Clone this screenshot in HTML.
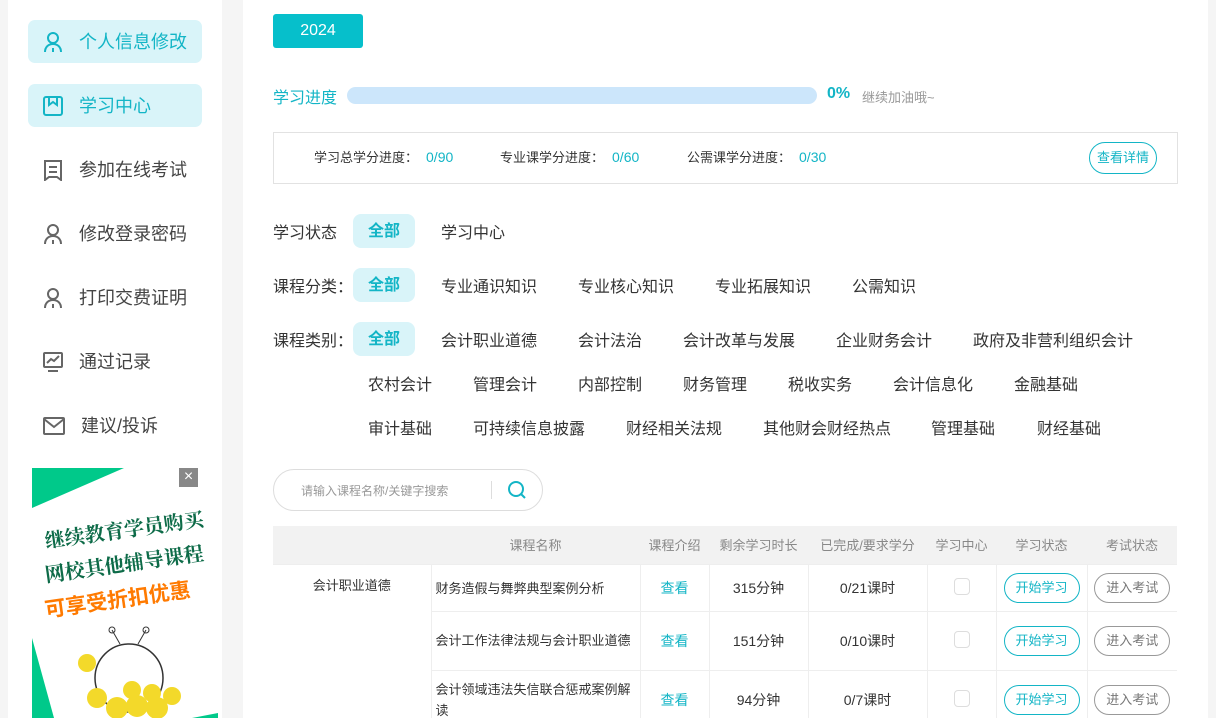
<!DOCTYPE html>
<html><head><meta charset="utf-8"><style>
*{margin:0;padding:0;box-sizing:border-box}
html,body{width:1216px;height:718px;overflow:hidden}
body{background:#f5f5f5;font-family:"Liberation Sans","Noto Sans CJK SC",sans-serif;color:#333;position:relative}
.a{position:absolute;white-space:nowrap}
#side{position:absolute;left:8px;top:0;width:214px;height:718px;background:#fff}
.mi{position:absolute;left:28px;width:174px;height:43px;border-radius:7px;font-size:18px;color:#444}
.mi.on{background:#d9f4f9;color:#13b5c6}
.mi svg{position:absolute;left:14px;top:11px}
.mi span{position:absolute;left:51px;top:8px}
#main{position:absolute;left:243px;top:0;width:965px;height:718px;background:#fff}
.f{font-size:16px;color:#333;position:absolute;white-space:nowrap;transform:translateY(-50%)}
.chip{position:absolute;left:353px;width:62px;height:34px;border-radius:8px;background:#d9f4f9;color:#13b5c6;font-weight:bold;font-size:16px;text-align:center;line-height:36px}
#tw{position:absolute;left:273px;top:526px;width:904px;height:192px;overflow:hidden}
table{border-collapse:collapse;width:904px;font-size:14px;table-layout:fixed}
td,th{border:1px solid #eee;text-align:center}
th{background:#f2f2f2;color:#888;font-weight:normal;font-size:13px;height:38px;border:none}
.btn{display:inline-block;width:76px;height:30px;border-radius:15px;border:1px solid #13b5c6;color:#13b5c6;line-height:28px;font-size:13px}
.btn.g{border-color:#999;color:#777}
.cb{display:inline-block;width:16px;height:17px;border:1px solid #ddd;border-radius:4px}
.v{color:#13b5c6;margin-left:8px;font-size:14px}
</style></head><body>
<div id="side"></div>
<div class="mi on" style="top:20px"><svg width="22" height="22" viewBox="0 0 22 22" fill="none" stroke="#13b5c6" stroke-width="2"><circle cx="11" cy="7" r="5"/><path d="M3 21c0-5 3.5-8 8-8s8 3 8 8M11 17v4"/></svg><span>个人信息修改</span></div>
<div class="mi on" style="top:84px"><svg width="22" height="22" viewBox="0 0 22 22" fill="none" stroke="#13b5c6" stroke-width="2"><rect x="2" y="2" width="18" height="18" rx="2"/><path d="M7 2v8l4-3 4 3V2"/></svg><span>学习中心</span></div>
<div class="mi" style="top:148px"><svg width="22" height="22" viewBox="0 0 22 22" fill="none" stroke="#666" stroke-width="2"><path d="M3 2h16v19l-4-3H7l-4 3z"/><path d="M7 8h8M7 13h8"/></svg><span>参加在线考试</span></div>
<div class="mi" style="top:212px"><svg width="22" height="22" viewBox="0 0 22 22" fill="none" stroke="#666" stroke-width="2"><circle cx="11" cy="7" r="5"/><path d="M3 21c0-5 3.5-8 8-8s8 3 8 8M11 17v4"/></svg><span>修改登录密码</span></div>
<div class="mi" style="top:276px"><svg width="22" height="22" viewBox="0 0 22 22" fill="none" stroke="#666" stroke-width="2"><circle cx="11" cy="7" r="5"/><path d="M3 21c0-5 3.5-8 8-8s8 3 8 8M11 17v4"/></svg><span>打印交费证明</span></div>
<div class="mi" style="top:340px"><svg width="22" height="22" viewBox="0 0 22 22" fill="none" stroke="#666" stroke-width="2"><rect x="2" y="2" width="18" height="14" rx="1"/><path d="M5 12l4-4 3 2 5-5M6 20h10"/></svg><span>通过记录</span></div>
<div class="mi" style="top:404px"><svg width="24" height="22" viewBox="0 0 24 22" fill="none" stroke="#666" stroke-width="2"><rect x="2" y="3" width="20" height="16" rx="1"/><path d="M2 4l10 8 10-8"/></svg><span style="left:53px">建议/投诉</span></div>
<div class="a" style="left:32px;top:468px;width:186px;height:250px;background:#fff;overflow:hidden">
<svg class="a" style="left:0;top:0" width="186" height="250"><polygon points="0,0 92,0 0,40" fill="#00c98a"/><polygon points="0,170 0,250 22,250" fill="#00c98a"/><polygon points="186,245 186,250 160,250" fill="#00c98a"/>
<circle cx="97" cy="210" r="34" fill="none" stroke="#333" stroke-width="1.5"/><path d="M88 176l-8-14M106 176l8-14" stroke="#333"/><circle cx="80" cy="162" r="3" fill="none" stroke="#333"/><circle cx="114" cy="162" r="3" fill="none" stroke="#333"/>
<g fill="#f3d92a"><circle cx="55" cy="195" r="9"/><circle cx="65" cy="230" r="10"/><circle cx="85" cy="240" r="11"/><circle cx="105" cy="238" r="11"/><circle cx="125" cy="240" r="11"/><circle cx="140" cy="228" r="9"/><circle cx="120" cy="225" r="9"/><circle cx="100" cy="222" r="9"/></g></svg>
<div class="a" style="left:12px;top:46px;font-size:20px;font-weight:bold;color:#0d6b48;transform:rotate(-8deg);font-family:'Noto Serif CJK SC',serif">继续教育学员购买</div>
<div class="a" style="left:12px;top:80px;font-size:20px;font-weight:bold;color:#0d6b48;transform:rotate(-8deg);font-family:'Noto Serif CJK SC',serif">网校其他辅导课程</div>
<div class="a" style="left:12px;top:116px;font-size:21px;font-weight:bold;color:#ff7a00;transform:rotate(-8deg)">可享受折扣优惠</div>
<div class="a" style="left:147px;top:0;width:19px;height:19px;background:#888;color:#fff;font-size:16px;line-height:18px;text-align:center">×</div>
</div>
<div id="main"></div>
<div class="a" style="left:273px;top:14px;width:90px;height:34px;background:#06bfcb;border-radius:3px;color:#fff;font-size:16px;text-align:center;line-height:34px">2024</div>
<div class="a" style="left:273px;top:84px;font-size:16px;color:#13b5c6">学习进度</div>
<div class="a" style="left:347px;top:87px;width:470px;height:17px;background:#cce6fb;border-radius:9px"></div>
<div class="a" style="left:827px;top:85px;font-size:16px;font-weight:bold;color:#13b5c6">0%</div>
<div class="a" style="left:862px;top:87px;font-size:13px;color:#999">继续加油哦~</div>
<div class="a" style="left:273px;top:132px;width:905px;height:52px;border:1px solid #e2e2e2"></div>
<div class="a" style="left:314px;top:147px;font-size:13px">学习总学分进度：<span class="v">0/90</span></div>
<div class="a" style="left:500px;top:147px;font-size:13px">专业课学分进度：<span class="v">0/60</span></div>
<div class="a" style="left:687px;top:147px;font-size:13px">公需课学分进度：<span class="v">0/30</span></div>
<div class="a" style="left:1089px;top:142px;width:68px;height:32px;border:1px solid #13b5c6;border-radius:16px;color:#13b5c6;font-size:13px;text-align:center;line-height:30px">查看详情</div>

<div class="chip" style="top:214px">全部</div>
<div class="chip" style="top:268px">全部</div>
<div class="chip" style="top:322px">全部</div>
<div class="f" style="left:273px;top:231px">学习状态</div><div class="f" style="left:441px;top:231px">学习中心</div>
<div class="f" style="left:273px;top:285px">课程分类：</div>
<div class="f" style="left:441px;top:285px">专业通识知识</div><div class="f" style="left:578px;top:285px">专业核心知识</div><div class="f" style="left:715px;top:285px">专业拓展知识</div><div class="f" style="left:852px;top:285px">公需知识</div>
<div class="f" style="left:273px;top:339px">课程类别：</div>
<div class="f" style="left:441px;top:339px">会计职业道德</div><div class="f" style="left:578px;top:339px">会计法治</div><div class="f" style="left:683px;top:339px">会计改革与发展</div><div class="f" style="left:836px;top:339px">企业财务会计</div><div class="f" style="left:973px;top:339px">政府及非营利组织会计</div>
<div class="f" style="left:368px;top:383px">农村会计</div><div class="f" style="left:473px;top:383px">管理会计</div><div class="f" style="left:578px;top:383px">内部控制</div><div class="f" style="left:683px;top:383px">财务管理</div><div class="f" style="left:788px;top:383px">税收实务</div><div class="f" style="left:893px;top:383px">会计信息化</div><div class="f" style="left:1014px;top:383px">金融基础</div>
<div class="f" style="left:368px;top:427px">审计基础</div><div class="f" style="left:473px;top:427px">可持续信息披露</div><div class="f" style="left:626px;top:427px">财经相关法规</div><div class="f" style="left:763px;top:427px">其他财会财经热点</div><div class="f" style="left:931px;top:427px">管理基础</div><div class="f" style="left:1037px;top:427px">财经基础</div>

<div class="a" style="left:273px;top:469px;width:270px;height:42px;border:1px solid #ddd;border-radius:21px"></div>
<div class="a" style="left:301px;top:482px;font-size:12px;color:#999">请输入课程名称/关键字搜索</div>
<div class="a" style="left:491px;top:481px;width:1px;height:18px;background:#ddd"></div>
<svg class="a" style="left:507px;top:480px" width="20" height="20" viewBox="0 0 20 20" fill="none" stroke="#13b5c6" stroke-width="2"><circle cx="9" cy="9" r="7"/><path d="M14 14l4 4"/></svg>

<div id="tw"><table>
<colgroup><col style="width:158px"><col style="width:209px"><col style="width:69px"><col style="width:99px"><col style="width:119px"><col style="width:69px"><col style="width:91px"><col style="width:90px"></colgroup>
<tr><th></th><th>课程名称</th><th>课程介绍</th><th>剩余学习时长</th><th>已完成/要求学分</th><th>学习中心</th><th>学习状态</th><th>考试状态</th></tr>
<tr style="height:47px"><td rowspan="3" style="vertical-align:top;padding-top:10px;border-left:none;font-size:13px">会计职业道德</td><td style="text-align:left;padding:0 4px;font-size:13px">财务造假与舞弊典型案例分析</td><td style="color:#13b5c6">查看</td><td>315分钟</td><td>0/21课时</td><td><span class="cb"></span></td><td><span class="btn">开始学习</span></td><td style="border-right:none"><span class="btn g">进入考试</span></td></tr>
<tr style="height:59px"><td style="text-align:left;padding:0 8px 0 4px;line-height:21px;font-size:13px">会计工作法律法规与会计职业道德</td><td style="color:#13b5c6">查看</td><td>151分钟</td><td>0/10课时</td><td><span class="cb"></span></td><td><span class="btn">开始学习</span></td><td style="border-right:none"><span class="btn g">进入考试</span></td></tr>
<tr style="height:59px"><td style="text-align:left;padding:0 8px 0 4px;line-height:21px;font-size:13px">会计领域违法失信联合惩戒案例解读</td><td style="color:#13b5c6">查看</td><td>94分钟</td><td>0/7课时</td><td><span class="cb"></span></td><td><span class="btn">开始学习</span></td><td style="border-right:none"><span class="btn g">进入考试</span></td></tr>
</table></div>
</body></html>
